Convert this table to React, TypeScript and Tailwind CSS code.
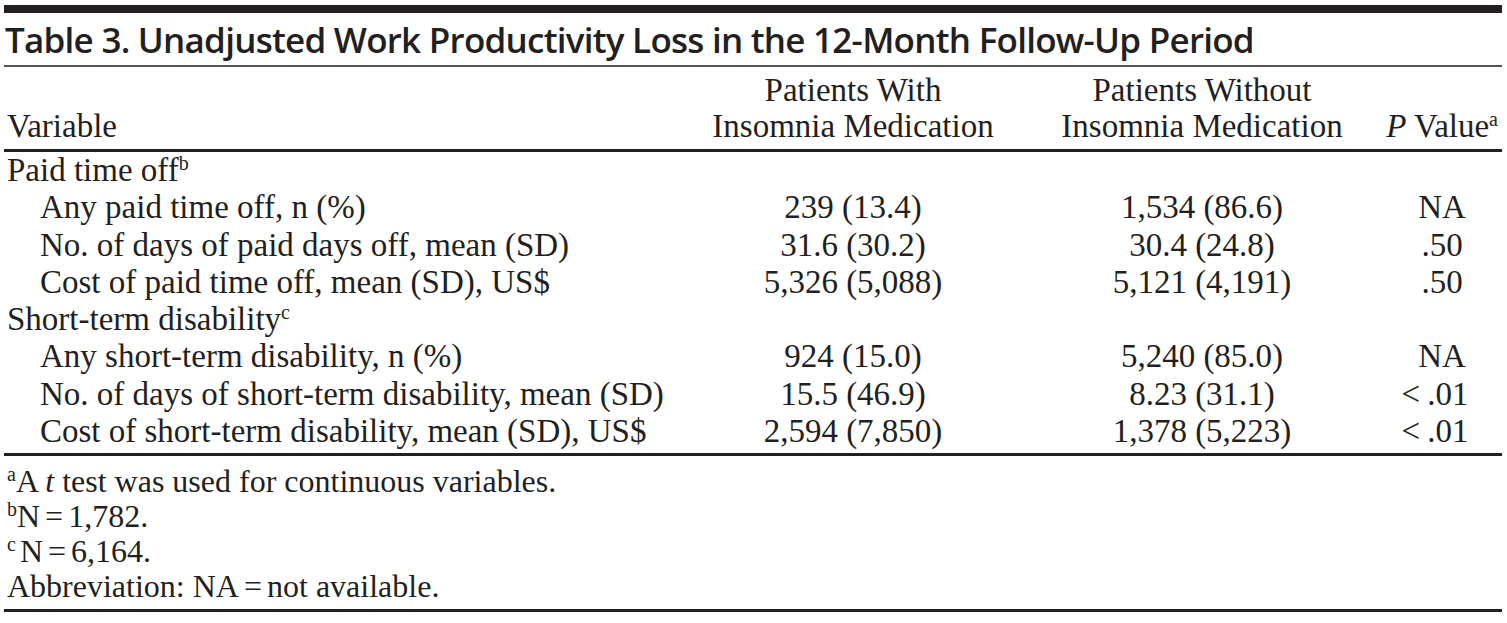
import React from "react";

const serif = { fontFamily: '"Liberation Serif", "Times New Roman", serif' };

function Sup({ children }: { children: React.ReactNode }) {
  return <span className="relative -top-[11px] text-[20px] leading-none">{children}</span>;
}

function Eq() {
  return <span className="mx-[5px]">=</span>;
}

type Row = { label: React.ReactNode; a?: string; b?: string; p?: React.ReactNode; sub?: boolean; lt?: boolean };

const lt = (
  <>
    <span className="mr-[7px]">&lt;</span>.01
  </>
);

const rows: Row[] = [
  { label: <>Paid time off<Sup>b</Sup></> },
  { label: "Any paid time off, n (%)", a: "239 (13.4)", b: "1,534 (86.6)", p: "NA", sub: true },
  { label: "No. of days of paid days off, mean (SD)", a: "31.6 (30.2)", b: "30.4 (24.8)", p: ".50", sub: true },
  { label: "Cost of paid time off, mean (SD), US$", a: "5,326 (5,088)", b: "5,121 (4,191)", p: ".50", sub: true },
  { label: <>Short-term disability<Sup>c</Sup></> },
  { label: "Any short-term disability, n (%)", a: "924 (15.0)", b: "5,240 (85.0)", p: "NA", sub: true },
  { label: "No. of days of short-term disability, mean (SD)", a: "15.5 (46.9)", b: "8.23 (31.1)", p: lt, sub: true, lt: true },
  { label: "Cost of short-term disability, mean (SD), US$", a: "2,594 (7,850)", b: "1,378 (5,223)", p: lt, sub: true, lt: true },
];

export default function App() {
  return (
    <div className="w-[1507px] h-[623px] bg-white text-[#231f20] overflow-hidden">
      <div className="ml-[4px] w-[1498px] pt-[5px]">
        <div className="h-[8px] bg-[#231f20]" />
        <div
          className="mt-[4px] pl-[1px] text-[35px] leading-[45px] font-semibold tracking-[-0.75px] whitespace-nowrap"
          style={{ fontFamily: '"Open Sans", "Noto Sans", sans-serif' }}
        >
          Table 3. Unadjusted Work Productivity Loss in the 12-Month Follow-Up Period
        </div>
        <div className="mt-[3px] h-[2px] bg-[#555]" />
        <div style={serif} className="text-[33px]">
          <div className="grid grid-cols-[696px_306px_392px_104px] pt-[5px] pb-[5px] leading-[36px]">
            <div className="self-end pl-[3px]">Variable</div>
            <div className="text-center">
              <div>Patients With</div>
              <div>Insomnia Medication</div>
            </div>
            <div className="text-center">
              <div>Patients Without</div>
              <div>Insomnia Medication</div>
            </div>
            <div className="self-end flex justify-end pr-[4px] whitespace-nowrap">
              <span>
                <i>P</i> Value<Sup>a</Sup>
              </span>
            </div>
          </div>
          <div className="h-[3px] bg-[#231f20]" />
          <div className="pb-[3px] leading-[37.3px]">
            {rows.map((r, i) => (
              <div key={i} className="grid grid-cols-[696px_306px_392px_104px]">
                <div className={r.sub ? "pl-[36px] whitespace-nowrap" : "pl-[3px] whitespace-nowrap"}>{r.label}</div>
                <div className="text-center">{r.a}</div>
                <div className="text-center">{r.b}</div>
                <div className={r.lt ? "text-center pr-[30px] whitespace-nowrap" : "text-center pr-[16px]"}>{r.p}</div>
              </div>
            ))}
          </div>
          <div className="h-[3px] bg-[#231f20]" />
          <div className="pt-[8px] pb-[5px] pl-[3px] text-[32px] leading-[35px]">
            <div>
              <Sup>a</Sup>A <i>t</i> test was used for continuous variables.
            </div>
            <div>
              <Sup>b</Sup>N<Eq />1,782.
            </div>
            <div>
              <Sup>c</Sup>
              <span className="ml-[4px]">N</span>
              <Eq />6,164.
            </div>
            <div>
              Abbreviation: NA<Eq />not available.
            </div>
          </div>
          <div className="h-[3px] bg-[#231f20]" />
        </div>
      </div>
    </div>
  );
}
